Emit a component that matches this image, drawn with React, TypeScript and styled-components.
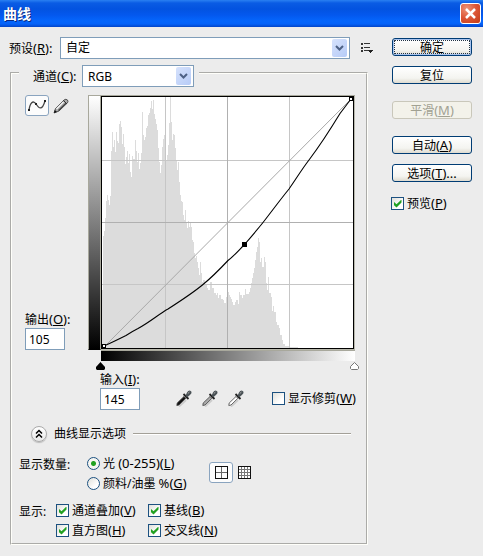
import React from "react";
import styled, { createGlobalStyle } from "styled-components";

const fonts = `"Noto Sans", "Noto Sans CJK SC", sans-serif`;

const GlobalStyle = createGlobalStyle`
  * { box-sizing: border-box; }
  body {
    margin: 0;
    background: #ececec;
    color: #000;
    font: 12px/14px ${fonts};
  }
  button, input, select { font: inherit; color: inherit; margin: 0; }
`;

const Dialog = styled.main`
  width: 100%;
`;

const TitleBar = styled.header`
  display: flex;
  align-items: center;
  justify-content: space-between;
  height: 27px;
  padding: 0 2px 0 3px;
  background: linear-gradient(#2a80f2 0, #0a5ce4 3px, #0353e0 9px, #0458ee 15px, #0566fc 21px, #0562f8 24px, #0345c8 27px);
`;

const Title = styled.h1`
  margin: 0;
  color: #fff;
  font-size: 14px;
  line-height: 20px;
  font-weight: 700;
  text-shadow: 1px 1px 0 #0a2a80;
`;

const CloseButton = styled.button`
  display: grid;
  place-items: center;
  width: 21px;
  height: 21px;
  padding: 0;
  border: 1px solid #fff;
  border-radius: 3px;
  background: radial-gradient(circle at 30% 25%, #ee9478, #dc5535 50%, #c23c18);
`;

const Body = styled.div`
  display: flex;
  align-items: flex-start;
  gap: 19px;
  padding: 10px 11px 11px 9px;
`;

const Settings = styled.form`
  flex: 1;
  min-width: 0;
`;

const PresetRow = styled.div`
  display: flex;
  align-items: center;
  height: 22px;
`;

const PresetLabel = styled.label`
  width: 51px;
  white-space: nowrap;
`;

const SelectBox = styled.span<{ $grow?: boolean }>`
  display: grid;
  grid-template-columns: 1fr 18px;
  align-items: center;
  height: 22px;
  ${(p) => (p.$grow ? "flex: 1;" : "width: 112px;")}

  & > * { grid-row: 1; }
`;

const Select = styled.select`
  grid-column: 1 / 3;
  width: 100%;
  height: 22px;
  padding: 0 20px 0 5px;
  border: 1px solid #7f9db9;
  border-radius: 0;
  background: #fff;
  appearance: none;
`;

const Arrow = styled.span`
  grid-column: 2;
  display: grid;
  place-items: center;
  width: 15px;
  height: 18px;
  border-radius: 2px;
  background: linear-gradient(135deg, #d6e2fc, #b6cbf7);
  pointer-events: none;
`;

const IconButton = styled.button<{ $on?: boolean }>`
  display: grid;
  place-items: center;
  width: ${(p) => (p.$on ? 24 : 16)}px;
  height: 21px;
  padding: 0;
  border: ${(p) => (p.$on ? "1px solid #8aa4bf" : "0")};
  border-radius: 3px;
  background: ${(p) => (p.$on ? "#fcfcfc" : "transparent")};
`;

const MenuButton = styled.button`
  display: grid;
  width: 12px;
  margin-left: 11px;
  padding: 0 0 2px;
  border: 0;
  background: transparent;
`;

const Group = styled.fieldset`
  min-width: 0;
  margin: 6px 5px 0 1px;
  padding: 14px 7px 5px;
  border: 2px groove #fffffa;
`;

const Legend = styled.legend`
  display: flex;
  height: 16px;
  padding: 0 5px 0 14px;
  line-height: 22px;
`;

const LegendLabel = styled.label`
  width: 49px;
  white-space: nowrap;
`;

const Latin = styled.span`
  font-size: 13px;
`;

const Graph = styled.div`
  display: grid;
  grid-template-columns: 63px 13px 254px;
  grid-template-rows: 255px 11px 10px;
  margin-left: 6px;
`;

const GraphSide = styled.div`
  display: flex;
  flex-direction: column;
  justify-content: space-between;
`;

const Tools = styled.div`
  display: flex;
  gap: 4px;
`;

const Field = styled.label`
  display: flex;
  flex-direction: column;
  gap: 1px;
  width: 62px;
  white-space: nowrap;
`;

const NumberInput = styled.input`
  width: 40px;
  height: 22px;
  padding: 0 3px;
  border: 1px solid #7f9db9;
  background: #fff;
`;

const OutputRamp = styled.div`
  border: 1px solid #a8a89c;
  border-bottom-color: #000;
  background: linear-gradient(#fff, #000);
`;

const PlotFrame = styled.div`
  border-top: 1px solid #a8a89c;
`;

const Plot = styled.svg`
  display: block;
  width: 254px;
  height: 254px;
`;

const InputRamp = styled.div`
  grid-column: 3;
  border-top: 1px solid #a8a89c;
  background: linear-gradient(90deg, #000, #fff);
`;

const Sliders = styled.div`
  grid-column: 3;
  display: flex;
  justify-content: space-between;
  align-items: center;
  margin: 0 -4px 0 -5px;
`;

const InputRow = styled.div`
  display: flex;
  align-items: flex-end;
  margin: 1px 0 0 81px;
`;

const Droppers = styled.div`
  display: flex;
  gap: 10px;
  margin: 0 28px 3px 14px;
`;

const DropperButton = styled.button`
  display: block;
  width: 16px;
  height: 18px;
  padding: 0;
  border: 0;
  background: transparent;
`;

const Option = styled.label`
  display: flex;
  align-items: center;
  gap: 3px;
  height: 15px;
  white-space: nowrap;
`;

const ClipOption = styled.div`
  margin-bottom: 4px;
`;

const Checkbox = styled.input.attrs({ type: "checkbox" })`
  display: grid;
  place-items: center;
  flex: none;
  width: 13px;
  height: 13px;
  border: 1px solid #1c5180;
  background: linear-gradient(135deg, #e0e0da, #fff 70%);
  appearance: none;

  &:checked::after {
    content: "";
    width: 8px;
    height: 8px;
    background: #21a121;
    clip-path: polygon(0 25%, 38% 58%, 100% 0, 100% 38%, 38% 100%, 0 65%);
  }
`;

const Radio = styled.input.attrs({ type: "radio" })`
  flex: none;
  width: 13px;
  height: 13px;
  border: 1px solid #1c5180;
  border-radius: 50%;
  background: linear-gradient(135deg, #e0e0da, #fff 70%);
  appearance: none;

  &:checked { background: radial-gradient(circle, #21a121 2px, #f6f6f2 3px); }
`;

const Disclosure = styled.div`
  display: flex;
  align-items: center;
  gap: 7px;
  height: 16px;
  margin: 16px 8px 0 12px;
`;

const DisclosureButton = styled.button`
  display: grid;
  place-items: center;
  width: 16px;
  height: 16px;
  padding: 0;
  border: 1px solid #aaa;
  border-radius: 50%;
  background: linear-gradient(#fff, #e8e8e8);
  box-shadow: 0 1px 1px #bbb;
`;

const Rule = styled.hr`
  flex: 1;
  height: 2px;
  margin: 0;
  border: 0;
  border-top: 1px solid #a3a098;
  border-bottom: 1px solid #fff;
`;

const AmountRow = styled.div`
  display: grid;
  grid-template-columns: 68px 122px 1fr;
  margin-top: 14px;
`;

const RowLabel = styled.span`
  padding-top: 2px;
`;

const Stack = styled.div`
  display: flex;
  flex-direction: column;
  gap: 5px;
`;

const GridTools = styled.div`
  display: flex;
  gap: 3px;
  padding-top: 6px;
`;

const ShowRow = styled.div`
  display: grid;
  grid-template-columns: 37px 92px 1fr;
  margin-top: 12px;
`;

const Actions = styled.aside`
  display: flex;
  flex-direction: column;
  width: 80px;
  padding-top: 1px;
`;

const PushButton = styled.button<{ $gap?: number; $primary?: boolean }>`
  height: 18px;
  margin-top: ${(p) => p.$gap ?? 0}px;
  padding: 1px 0 0;
  border: 1px solid #003c74;
  border-radius: 3px;
  background: linear-gradient(#fff, #f4f4f0 70%, #dedbd0);
  line-height: 15px;
  white-space: nowrap;
  ${(p) => p.$primary && "box-shadow: inset 0 0 0 1px #a9c3ee; outline: 1px dotted #234; outline-offset: -3px;"}

  &:disabled {
    border-color: #c9c7ba;
    background: #f3f2ea;
    color: #a1a192;
  }
`;

const PreviewOption = styled.div`
  margin: 14px 0 0 -1px;
`;

/* Top edge of the luminosity histogram, as [column, y]. */
const histogram: [number, number][] = [
  [102, 290], [103, 236], [104, 231], [105, 218], [106, 201], [107, 195], [108, 200], [109, 205], [110, 196],
  [111, 151], [112, 132], [113, 147], [114, 140], [115, 152], [116, 132], [117, 141], [118, 143], [119, 124],
  [120, 121], [121, 127], [122, 144], [123, 134], [124, 147], [125, 164], [126, 157], [127, 151], [128, 163],
  [129, 154], [130, 172], [131, 177], [132, 156], [133, 159], [135, 140], [136, 151], [137, 162], [138, 153],
  [139, 169], [140, 163], [141, 153], [142, 112], [143, 135], [144, 140], [145, 137], [146, 128], [147, 126],
  [148, 115], [149, 113], [150, 108], [151, 101], [152, 109], [153, 100], [154, 114], [155, 119], [156, 124],
  [157, 130], [158, 148], [159, 162], [160, 173], [161, 165], [162, 147], [163, 139], [164, 135], [165, 97],
  [166, 160], [167, 155], [168, 145], [169, 123], [170, 97], [171, 122], [172, 140], [173, 134], [174, 135],
  [175, 148], [176, 160], [177, 170], [178, 162], [179, 182], [180, 195], [181, 201], [182, 202], [183, 215],
  [184, 220], [185, 210], [186, 223], [187, 228], [188, 221], [189, 227], [190, 223], [191, 227], [192, 240],
  [193, 242], [194, 253], [195, 258], [196, 256], [197, 262], [198, 268], [199, 275], [200, 262], [201, 273],
  [202, 282], [203, 280], [205, 285], [207, 288], [208, 290], [210, 282], [212, 288], [214, 293], [216, 295],
  [217, 293], [218, 298], [219, 295], [221, 299], [223, 300], [224, 303], [226, 297], [227, 290], [228, 292],
  [229, 295], [230, 297], [231, 299], [232, 302], [233, 305], [235, 302],
  [236, 300], [238, 304], [239, 292], [240, 295], [242, 298], [243, 295], [245, 289], [246, 294], [249, 292],
  [250, 288], [251, 283], [252, 278], [253, 273], [254, 268], [255, 260], [256, 252], [257, 247], [258, 238],
  [259, 242], [260, 262], [261, 258], [262, 267], [264, 257], [265, 262], [266, 283], [267, 290], [268, 277],
  [269, 293], [271, 297], [272, 311], [273, 306], [274, 312], [276, 322], [277, 325], [279, 328], [280, 335],
  [282, 340], [283, 344], [285, 346], [289, 347], [298, 348],
];

const histogramPath = "M102 349" + histogram.map(([x, y]) => `H${x}V${y}`).join("") + "V349Z";

function Key({ k, after = "" }: { k: string; after?: string }) {
  return (
    <Latin>
      (<u>{k}</u>){after}
    </Latin>
  );
}

function Dropdown({ id, value, grow }: { id: string; value: string; grow?: boolean }) {
  return (
    <SelectBox $grow={grow}>
      <Select id={id} defaultValue={value}>
        <option>{value}</option>
      </Select>
      <Arrow>
        <svg width="9" height="6" viewBox="0 0 9 6">
          <path d="M1 1 4.500 4.500 8 1" fill="none" stroke="#4d6185" strokeWidth="2" />
        </svg>
      </Arrow>
    </SelectBox>
  );
}

function Check({ text, k, checked = true }: { text: string; k: string; checked?: boolean }) {
  return (
    <Option>
      <Checkbox defaultChecked={checked} />
      <span>
        {text}
        <Key k={k} />
      </span>
    </Option>
  );
}

function Dropper({ name, fill }: { name: string; fill: string }) {
  return (
    <DropperButton type="button" aria-label={name}>
      <svg width="16" height="18" viewBox="0 0 16 18">
        <path d="M3 17.500 10 11" stroke="#ccc" strokeWidth="2" />
        <path d="M.8 16.500 1.200 14 8 7.500 9.800 9.300 3 16Z" fill={fill} stroke="#444" strokeWidth=".8" />
        <path d="M7.500 5 12.500 10" stroke="#222" strokeWidth="1.800" />
        <path d="M9.500 6.800 11 3.500Q12 1.500 13.800 1.500 16 2 15.500 4 15 5.500 11 8.300Z" fill="#4a5256" />
        <path d="M11.800 4.500 13.500 3" stroke="#aaa" />
      </svg>
    </DropperButton>
  );
}

export default function App() {
  return (
    <Dialog>
      <GlobalStyle />
      <TitleBar>
        <Title>曲线</Title>
        <CloseButton aria-label="关闭">
          <svg width="13" height="13" viewBox="0 0 13 13">
            <path d="M2 2 11 11M11 2 2 11" stroke="#fff" strokeWidth="2.500" />
          </svg>
        </CloseButton>
      </TitleBar>
      <Body>
        <Settings>
          <PresetRow>
            <PresetLabel htmlFor="preset">
              预设
              <Key k="R" after=":" />
            </PresetLabel>
            <Dropdown id="preset" value="自定" grow />
            <MenuButton type="button" aria-label="预设选项">
              <svg width="12" height="11" viewBox="0 0 12 11" shapeRendering="crispEdges">
                <path d="M3 1.500H9M3 5.500H9M3 8.500H7" stroke="#333" />
                <path d="M0 1.500H2M0 5.500H2M0 8.500H2" stroke="#333" strokeWidth="2" />
                <path d="M7 8H12L9.500 11Z" fill="#222" />
              </svg>
            </MenuButton>
          </PresetRow>

          <Group>
            <Legend>
              <LegendLabel htmlFor="channel">
                通道
                <Key k="C" after=":" />
              </LegendLabel>
              <Dropdown id="channel" value="RGB" />
            </Legend>

            <Graph>
              <GraphSide>
                <Tools>
                  <IconButton type="button" $on aria-label="编辑点以修改曲线">
                    <svg width="20" height="15" viewBox="0 0 20 15">
                      <path d="M2 12C3 5 6 1.500 9 6S15 13 18 3" fill="none" stroke="#444" strokeWidth="1.300" />
                      <path d="M1 11H3V13H1ZM8 5H10V7H8ZM17 2H19V4H17Z" fill="#222" />
                    </svg>
                  </IconButton>
                  <IconButton type="button" aria-label="通过绘制来修改曲线">
                    <svg width="16" height="16" viewBox="0 0 16 16">
                      <path d="M1 15 2.500 10.500 11 2Q13 .5 14.500 2 15.500 3.500 14.500 4.800L6 13Z" fill="#aaa" stroke="#333" strokeWidth=".8" />
                      <path d="M3.500 11 10.500 4" stroke="#f4f4f4" strokeWidth="1.500" />
                      <path d="M5.500 12.500 13 5.200" stroke="#444" strokeWidth="1.200" />
                      <path d="M1 15 1.800 12 4 14Z" fill="#111" />
                      <path d="M10.500 2.500 14 6" stroke="#333" />
                    </svg>
                  </IconButton>
                </Tools>
                <Field>
                  <span>
                    输出
                    <Key k="O" after=":" />
                  </span>
                  <NumberInput defaultValue="105" inputMode="numeric" />
                </Field>
              </GraphSide>
              <OutputRamp />
              <PlotFrame>
                <Plot viewBox="101 96 254 254" role="img" aria-label="RGB 曲线">
                  <g shapeRendering="crispEdges">
                    <path d="M101 96H355V350H101Z" fill="#fff" />
                    <path d={histogramPath} fill="#dcdcdc" />
                    <path d="M165.500 97V349M289.500 97V349M102 160.500H354M102 284.500H354" stroke="#c6c6c6" />
                    <path d="M227.500 97V349M102 222.500H354" stroke="#b0b0b0" />
                    <path d="M101.500 96.500H353.500V348.500H101.500Z" fill="none" stroke="#000" />
                    <path d="M354.500 96V349.500H101" fill="none" stroke="#b8b8ac" />
                  </g>
                  <path d="M105 346 351 99" stroke="#a8a8a8" />
                  <path
                    d="M105 345.500C111 343 119 339 126 335.500Q133 331 138 328.500C150 322 159 314 168 309C182 300 194 292 203 284.500C211 278 220 269 228 260.500C234 256 239 250 244.500 244.500C251 237 257 230 263 222.500C272 211 280 200 289 189C296 179 302 169 309 160C321 144 333 125 340 113.500L351 99"
                    fill="none"
                    stroke="#000"
                    strokeWidth="1.100"
                  />
                  <path d="M242 242H247V247H242Z" fill="#000" shapeRendering="crispEdges" />
                  <path
                    d="M102.500 344.500H105.500V347.500H102.500ZM349.500 97.500H352.500V100.500H349.500Z"
                    fill="#fff"
                    stroke="#000"
                    shapeRendering="crispEdges"
                  />
                </Plot>
              </PlotFrame>
              <InputRamp />
              <Sliders>
                <svg width="9" height="8" viewBox="0 0 9 8">
                  <path d="M1 8 0 7V5L4.500 0 9 5V7L8 8Z" fill="#000" />
                </svg>
                <svg width="9" height="8" viewBox="0 0 9 8">
                  <path d="M1.500 7.500.5 6.500V4.500L4.500.5 8.500 4.500V6.500L7.500 7.500Z" fill="#fff" stroke="#777" />
                </svg>
              </Sliders>
            </Graph>

            <InputRow>
              <Field>
                <span>
                  输入
                  <Key k="I" after=":" />
                </span>
                <NumberInput defaultValue="145" inputMode="numeric" />
              </Field>
              <Droppers>
                <Dropper name="设置黑场" fill="#111" />
                <Dropper name="设置灰场" fill="#aaa" />
                <Dropper name="设置白场" fill="#fff" />
              </Droppers>
              <ClipOption>
                <Check text="显示修剪" k="W" checked={false} />
              </ClipOption>
            </InputRow>

            <Disclosure>
              <DisclosureButton type="button" aria-label="折叠">
                <svg width="8" height="10" viewBox="0 0 8 10">
                  <path d="M1 4.500 4 1.500 7 4.500M1 8.500 4 5.500 7 8.500" fill="none" stroke="#000" strokeWidth="1.500" />
                </svg>
              </DisclosureButton>
              <span>曲线显示选项</span>
              <Rule />
            </Disclosure>

            <AmountRow>
              <RowLabel>显示数量:</RowLabel>
              <Stack>
                <Option>
                  <Radio name="amount" defaultChecked />
                  <span>
                    光 <Latin>(0-255)</Latin>
                    <Key k="L" />
                  </span>
                </Option>
                <Option>
                  <Radio name="amount" />
                  <span>
                    颜料/油墨 <Latin>%</Latin>
                    <Key k="G" />
                  </span>
                </Option>
              </Stack>
              <GridTools>
                <IconButton type="button" $on aria-label="简单网格">
                  <svg width="13" height="13" viewBox="0 0 13 13" shapeRendering="crispEdges">
                    <path d="M6.500 0V13M0 6.500H13" stroke="#666" />
                    <path d="M.5.5H12.500V12.500H.5Z" fill="none" stroke="#111" />
                  </svg>
                </IconButton>
                <IconButton type="button" aria-label="详细网格">
                  <svg width="13" height="13" viewBox="0 0 13 13" shapeRendering="crispEdges">
                    <path d="M0 0H13V13H0Z" fill="#fff" />
                    <path d="M3.500 0V13M6.500 0V13M9.500 0V13M0 3.500H13M0 6.500H13M0 9.500H13" stroke="#777" />
                    <path d="M.5.5H12.500V12.500H.5Z" fill="none" stroke="#111" />
                  </svg>
                </IconButton>
              </GridTools>
            </AmountRow>

            <ShowRow>
              <RowLabel>显示:</RowLabel>
              <Stack>
                <Check text="通道叠加" k="V" />
                <Check text="直方图" k="H" />
              </Stack>
              <Stack>
                <Check text="基线" k="B" />
                <Check text="交叉线" k="N" />
              </Stack>
            </ShowRow>
          </Group>
        </Settings>

        <Actions>
          <PushButton $primary>确定</PushButton>
          <PushButton $gap={10}>复位</PushButton>
          <PushButton $gap={17} disabled>
            平滑
            <Key k="M" />
          </PushButton>
          <PushButton $gap={17}>
            自动
            <Key k="A" />
          </PushButton>
          <PushButton $gap={10}>
            选项
            <Key k="T" after="..." />
          </PushButton>
          <PreviewOption>
            <Check text="预览" k="P" />
          </PreviewOption>
        </Actions>
      </Body>
    </Dialog>
  );
}
